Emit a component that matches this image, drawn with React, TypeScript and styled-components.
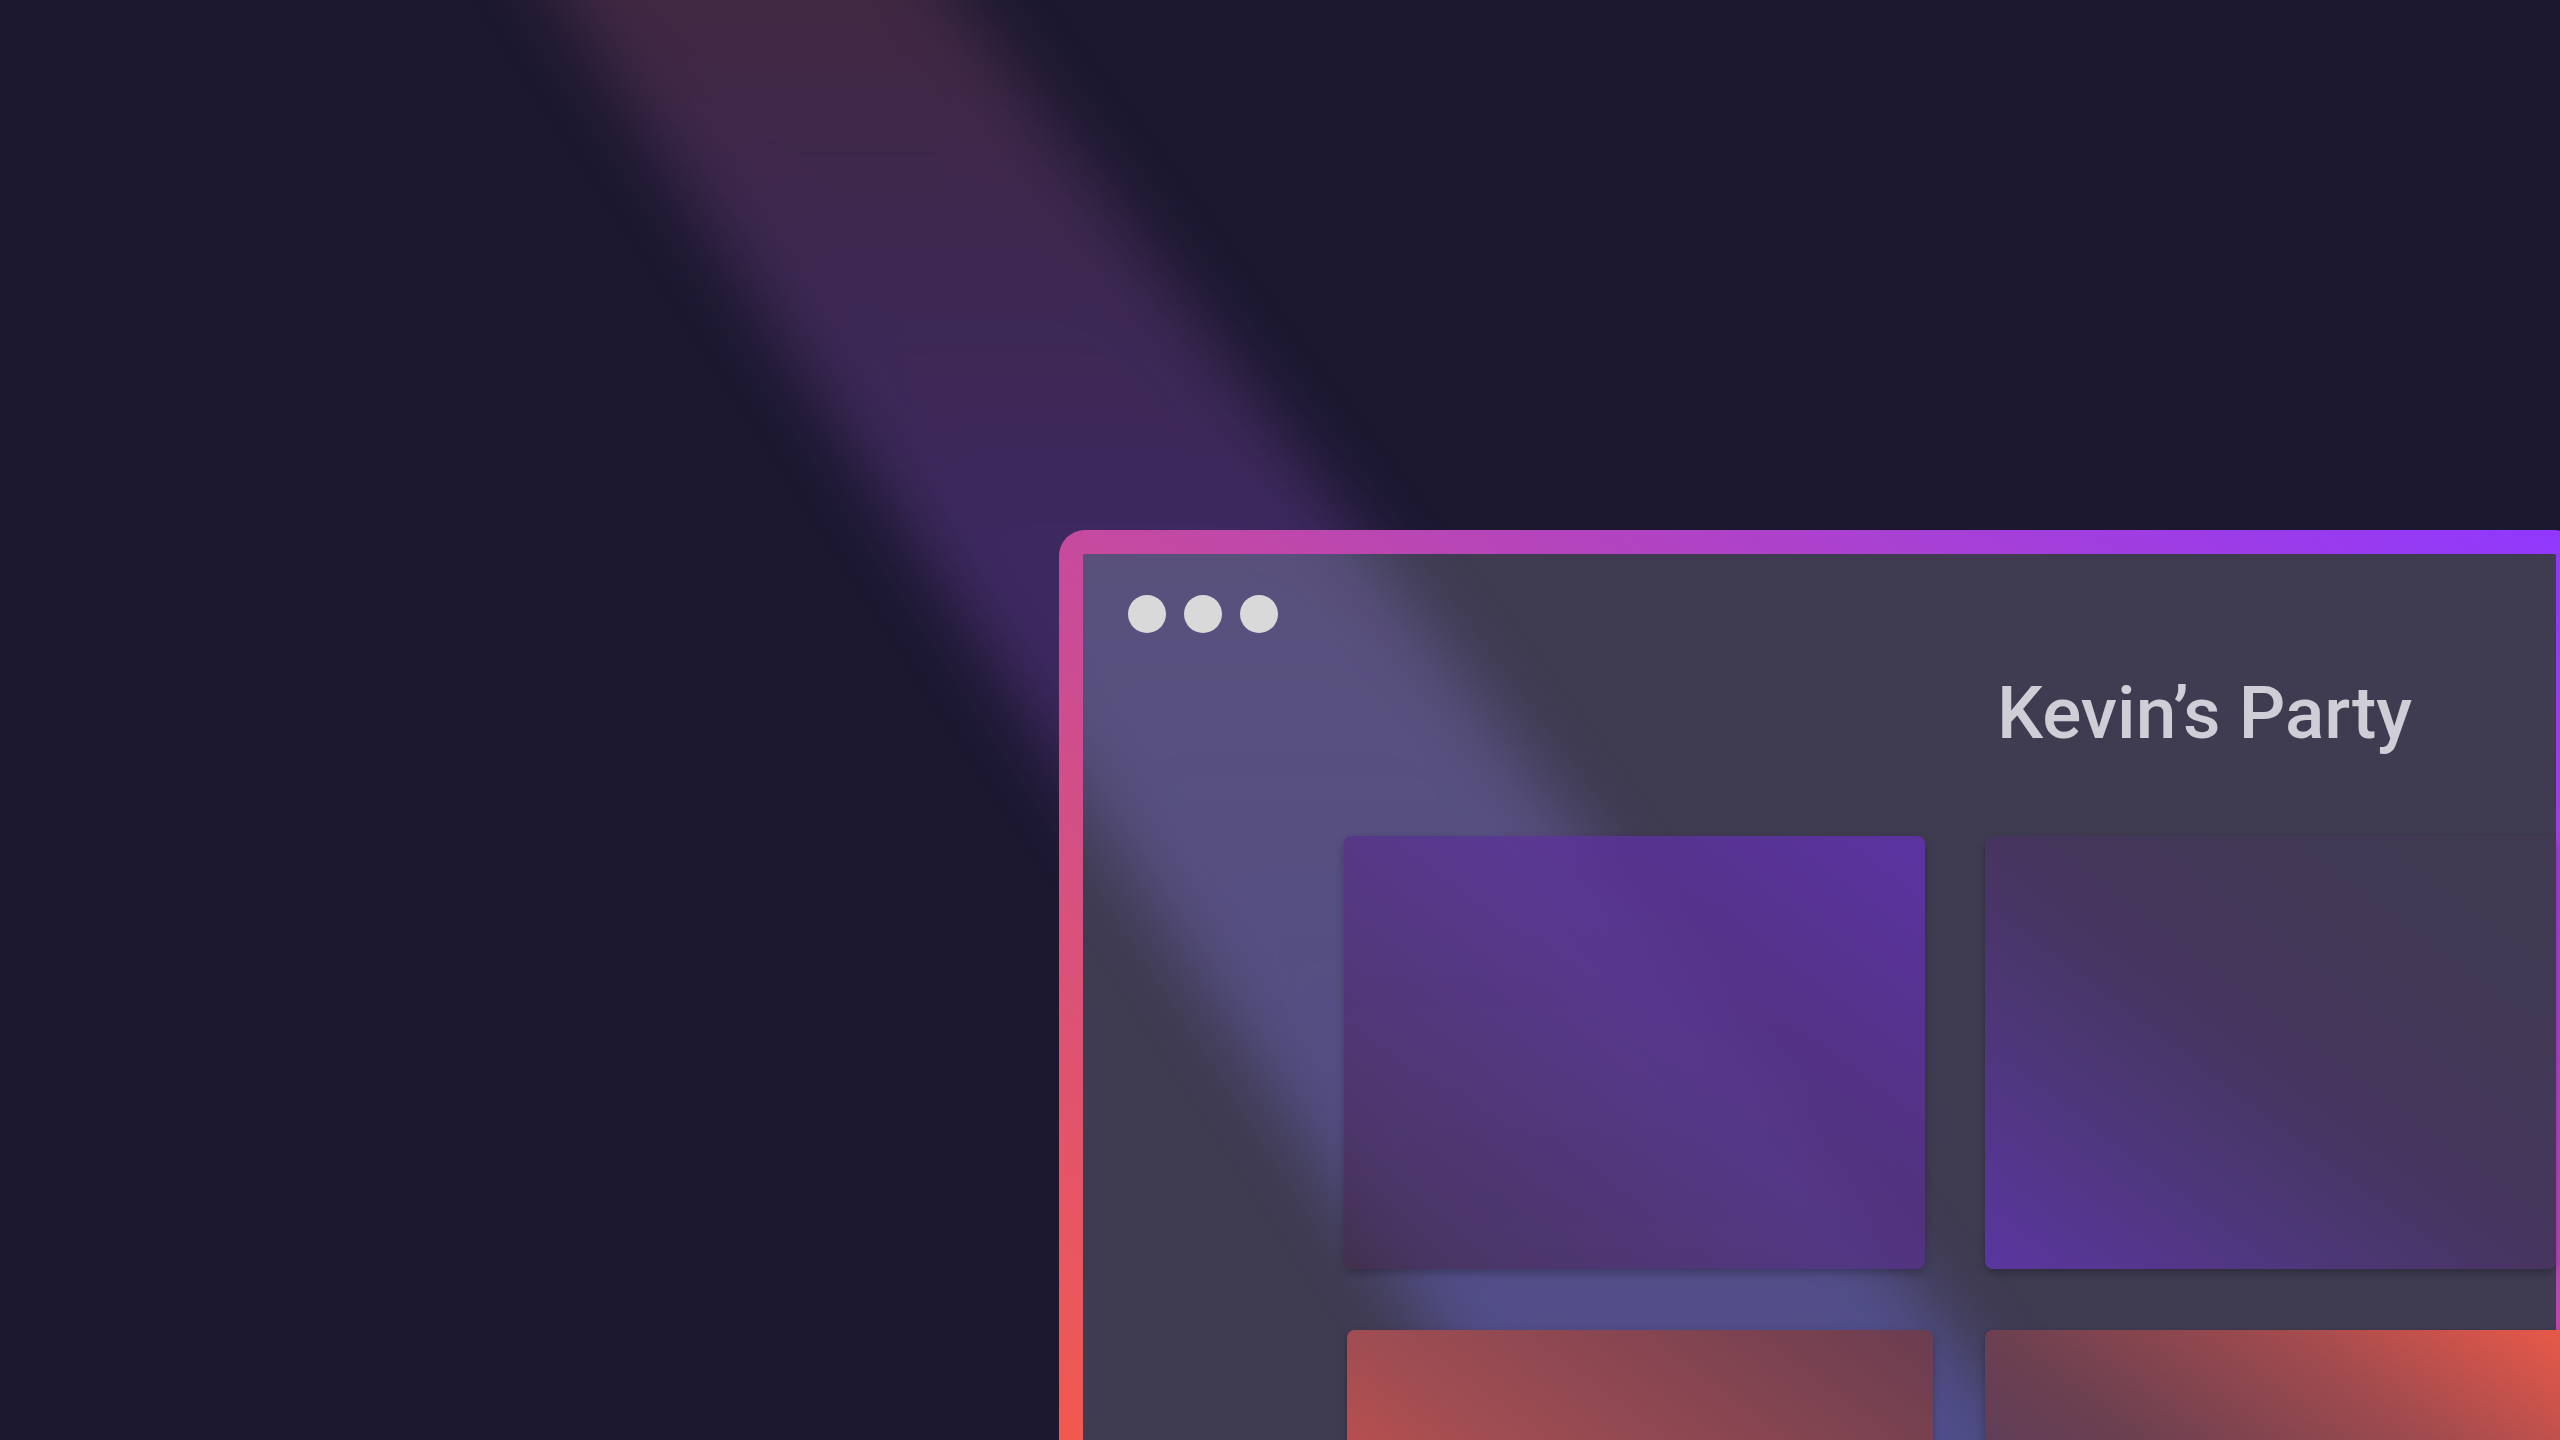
import React from "react";
import styled, { createGlobalStyle } from "styled-components";

const GlobalStyle = createGlobalStyle`
  html, body {
    margin: 0;
    padding: 0;
    background: #1c1830;
    overflow: hidden;
  }
  #root {
    width: 2560px;
    height: 1440px;
  }
`;

/* beam geometry in stage coordinates (px) */
const PAD = 400;
const beamPolygon = (): string => {
  const pts: Array<[number, number]> = [
    [364, -300],
    [737, -300],
    [2222, 1700],
    [1672, 1700],
  ];
  return pts.map(([x, y]) => `${x + PAD}px ${y + PAD}px`).join(", ");
};

const Stage = styled.main`
  position: relative;
  width: 2560px;
  height: 1440px;
  overflow: hidden;
  box-sizing: border-box;
  padding: 530px 0 0 1059px;
  background: #1c1830;
  font-family: Roboto, "Noto Sans", "Liberation Sans", sans-serif;
`;

const BeamClip = styled.div<{ $radius: number }>`
  position: absolute;
  inset: 0;
  overflow: hidden;
  pointer-events: none;
  border-radius: ${(p) => p.$radius}px;
  z-index: 0;
`;

const BeamBlur = styled.div`
  position: absolute;
  inset: 0;
  filter: blur(34px);
`;

const BeamShape = styled.div<{ $dx: number; $dy: number; $tone: "page" | "window" }>`
  position: absolute;
  left: ${(p) => -PAD - p.$dx}px;
  top: ${(p) => -PAD - p.$dy}px;
  width: 3400px;
  height: 2300px;
  clip-path: polygon(${beamPolygon()});
  background: ${(p) =>
    p.$tone === "page"
      ? `linear-gradient(to bottom, rgba(150, 78, 108, 0.3) ${PAD}px, rgba(142, 80, 170, 0.29) ${PAD + 300}px, rgba(140, 80, 210, 0.3) ${PAD + 560}px)`
      : `linear-gradient(to bottom, rgba(150, 130, 224, 0.3) ${PAD + 554}px, rgba(128, 118, 226, 0.34) ${PAD + 1000}px, rgba(105, 106, 228, 0.4) ${PAD + 1440}px)`};
`;

const Window = styled.section`
  position: relative;
  z-index: 1;
  width: 1521px;
  height: 1000px;
  box-sizing: border-box;
  padding: 24px;
  border-radius: 26px;
  background: linear-gradient(to top right, #f65b46 0%, #c64a9e 50%, #8f38ff 100%);
`;

const Content = styled.div`
  position: relative;
  height: 100%;
  border-radius: 2px;
  background: #3f3b51;
  display: flex;
  flex-direction: column;
`;

const DotRow = styled.div`
  position: relative;
  z-index: 1;
  display: flex;
  gap: 18px;
  margin: 41px 0 0 45px;
`;

const Dot = styled.span`
  width: 38px;
  height: 38px;
  border-radius: 50%;
  background: #d9d9d9;
`;

const Title = styled.h1`
  position: relative;
  z-index: 1;
  margin: 44px 0 0 914px;
  font-family: Roboto, "Noto Sans", "Liberation Sans", sans-serif;
  font-weight: 500;
  font-size: 73px;
  line-height: 73px;
  color: #cfcdd6;
  white-space: nowrap;
`;

const CardGrid = styled.div`
  position: relative;
  z-index: 1;
  display: flex;
  flex-direction: column;
  gap: 61px;
  margin-top: 86px;
  padding-left: 261px;
`;

const CardRow = styled.div<{ $gap: number; $indent: number }>`
  display: flex;
  gap: ${(p) => p.$gap}px;
  padding-left: ${(p) => p.$indent}px;
`;

type Tone = "violetTR" | "violetBL" | "coralBL" | "coralTR";

const toneBg: Record<Tone, string> = {
  violetTR:
    "linear-gradient(to top right, rgba(67, 43, 75, 0.7) 0%, rgba(86, 46, 138, 0.7) 50%, rgba(104, 48, 196, 0.7) 100%)",
  violetBL:
    "linear-gradient(to top right, #5a36a0 0%, #4d3778 30%, #46355f 50%, #423a55 75%, #413a52 100%)",
  coralBL:
    "linear-gradient(to top right, #f55a48 0%, #b84f4f 37%, #a04d52 50%, #6a3d50 100%)",
  coralTR:
    "linear-gradient(to top right, #4f3b62 0%, #603e58 37%, #6c4050 50%, #a24b4e 75%, #ee5a48 100%)",
};

const Card = styled.div<{ $w: number; $tone: Tone }>`
  flex: none;
  width: ${(p) => p.$w}px;
  height: 433px;
  border-radius: 8px;
  background: ${(p) => toneBg[p.$tone]};
  box-shadow: 0 4px 8px rgba(0, 0, 0, 0.25);
`;

export default function App() {
  return (
    <>
      <GlobalStyle />
      <Stage>
        <BeamClip $radius={0}>
          <BeamBlur>
            <BeamShape $dx={0} $dy={0} $tone="page" />
          </BeamBlur>
        </BeamClip>
        <Window>
          <Content>
            <BeamClip $radius={2}>
              <BeamBlur>
                <BeamShape $dx={1083} $dy={554} $tone="window" />
              </BeamBlur>
            </BeamClip>
            <DotRow>
              <Dot />
              <Dot />
              <Dot />
            </DotRow>
            <Title>Kevin’s Party</Title>
            <CardGrid>
              <CardRow $gap={60} $indent={0}>
                <Card $w={581} $tone="violetTR" />
                <Card $w={571} $tone="violetBL" />
              </CardRow>
              <CardRow $gap={52} $indent={3}>
                <Card $w={586} $tone="coralBL" />
                <Card $w={600} $tone="coralTR" />
              </CardRow>
            </CardGrid>
          </Content>
        </Window>
      </Stage>
    </>
  );
}
